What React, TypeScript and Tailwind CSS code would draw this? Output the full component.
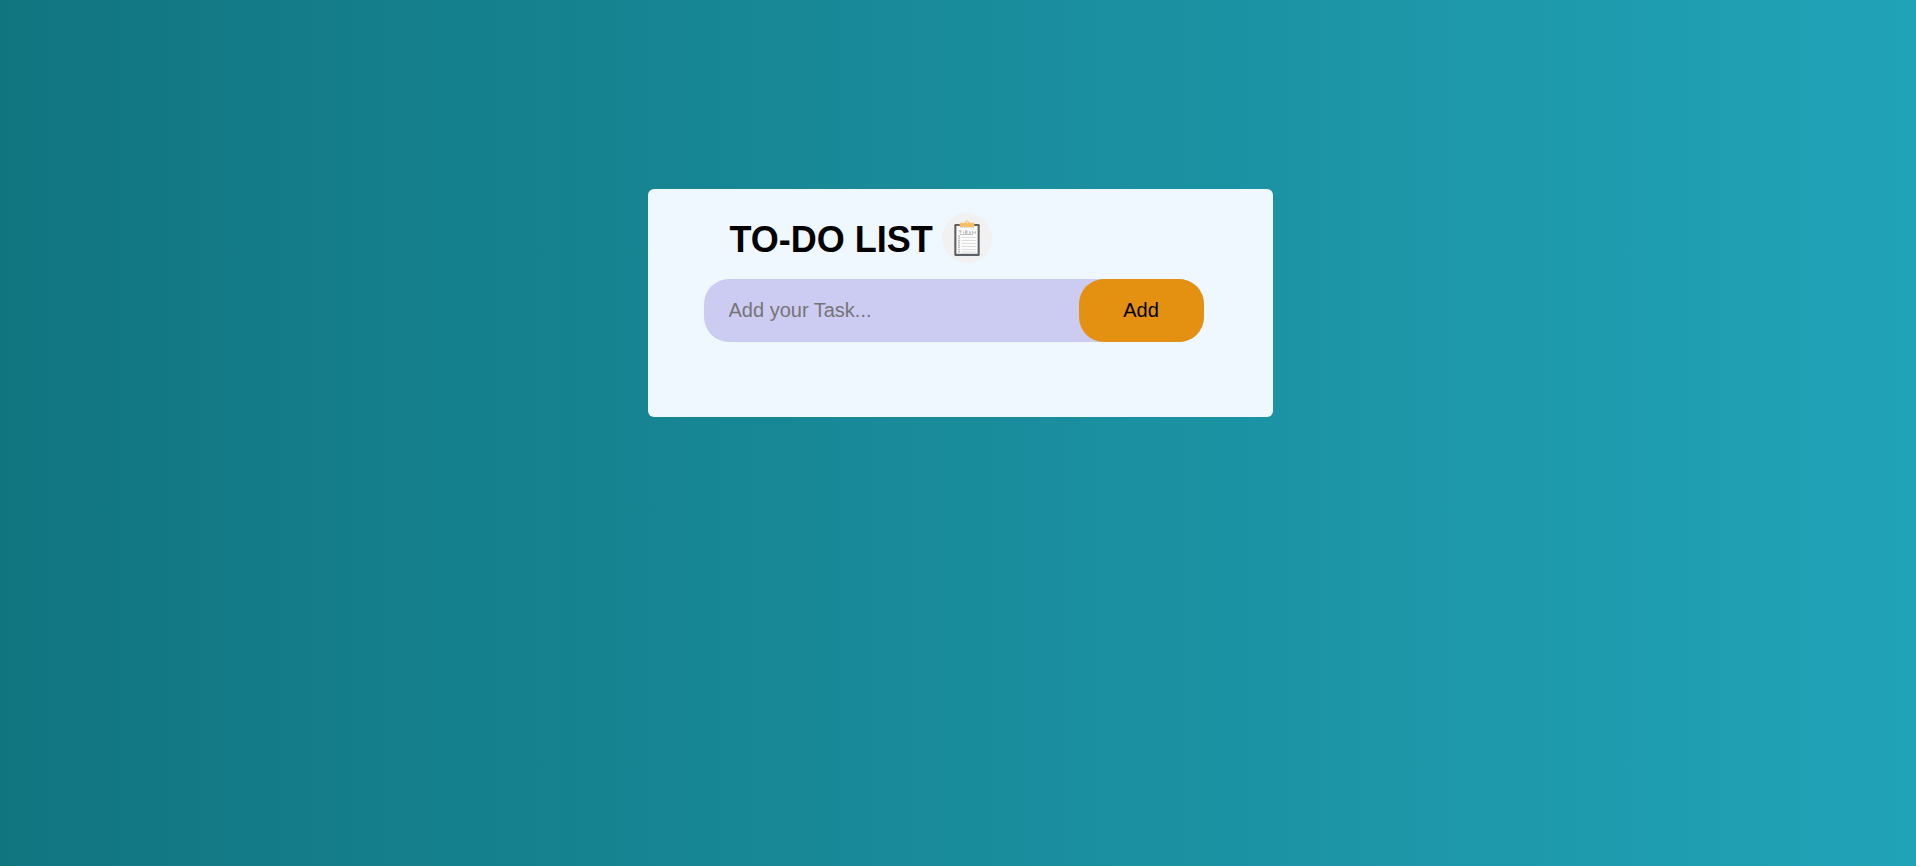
import { useState } from "react";
import type { FormEvent } from "react";

const lineRows = [24.5, 27.5, 30.5, 33.5, 36.5, 39];

function ClipboardIcon() {
  return (
    <svg viewBox="0 0 50 50" className="size-[50px] shrink-0" aria-hidden="true">
      <circle cx="25" cy="25" r="25" fill="#f1f1f1" />
      <rect x="12.3" y="11" width="25.4" height="32" rx="1.2" fill="#5d6064" />
      <rect x="14.4" y="13" width="21.2" height="27.800" fill="#fbfbfb" />
      <path d="M18 13.8h14v1H18z" fill="#dcdcdc" />
      <path
        d="M16.800 17.800h2.800M18.200 17.800v2.800M21.400 18.400v2M23.400 17.800h1.600v2.600h-1.600zM27 18.800h1.200v1.600H27M30.400 17.800v2.800M32 18.600v2M33.600 18.200v2.400"
        fill="none"
        stroke="#9a9a9a"
        strokeWidth="0.7"
      />
      <path d="M18 21.5h13" stroke="#b4b4b4" strokeWidth="0.8" />
      <path d="M17 22.600v17" stroke="#a8a8a8" strokeWidth="1.400" strokeDasharray="1.500 0.700" />
      {lineRows.map((y) => (
        <path key={y} d={`M19.5 ${y}H34`} stroke="#dadada" strokeWidth="0.9" />
      ))}
      <path
        d="M18.600 14c-.7 0-1-.4-1-1v-1.800c0-.9.500-1.400 1.400-1.400h3.400c.5 0 .7-.4.800-.8.300-1.100.900-1.600 1.800-1.600s1.500.5 1.800 1.600c.1.400.3.800.8.800H31c.9 0 1.400.5 1.400 1.400V13c0 .6-.3 1-1 1z"
        fill="#f8be5f"
      />
      <circle cx="25" cy="9.400" r="0.9" fill="#fdf3e0" />
    </svg>
  );
}

export default function App() {
  const [draft, setDraft] = useState("");
  const [tasks, setTasks] = useState<string[]>([]);

  function addTask(event: FormEvent) {
    event.preventDefault();
    const text = draft.trim();
    if (!text) return;
    setTasks([...tasks, text]);
    setDraft("");
  }

  return (
    <main className="flex min-h-screen items-start justify-center bg-linear-to-r from-[#117580] to-[#21a3b7] pt-[189px] pr-4 pb-10 pl-5 font-['Liberation_Sans',Arial,sans-serif] text-black">
      <section className="w-full max-w-[625px] rounded-md bg-[#f0f8ff] pt-6 pr-[69px] pb-[75px] pl-14">
        <div className="flex items-center gap-[9px] pl-[26px]">
          <h1 className="pt-1 text-4xl font-bold">TO-DO LIST</h1>
          <ClipboardIcon />
        </div>
        <form onSubmit={addTask} className="mt-4 flex rounded-[25px] bg-[#cccbf1]">
          <input
            type="text"
            aria-label="Task"
            placeholder="Add your Task..."
            value={draft}
            onChange={(event) => setDraft(event.target.value)}
            className="h-[63px] min-w-0 flex-1 bg-transparent pl-[25px] text-xl outline-none placeholder:text-[#757575]"
          />
          <button type="submit" className="w-[125px] cursor-pointer rounded-[25px] bg-[#e49010] pb-0.5 text-xl">
            Add
          </button>
        </form>
        {tasks.length > 0 && (
          <ul className="mt-6 flex flex-col gap-3 pl-[25px] text-xl">
            {tasks.map((task, index) => (
              <li key={index}>{task}</li>
            ))}
          </ul>
        )}
      </section>
    </main>
  );
}
